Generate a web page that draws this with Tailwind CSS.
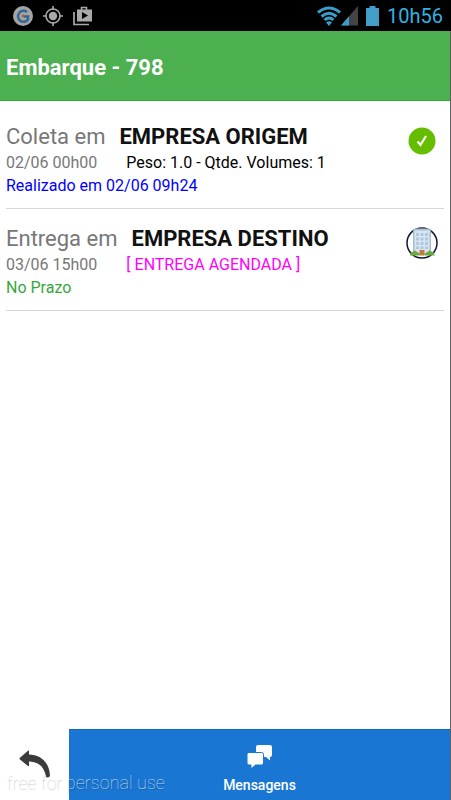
<!DOCTYPE html>
<html lang="pt-BR">
<head>
<meta charset="utf-8">
<meta name="viewport" content="width=device-width, initial-scale=1">
<title>Embarque - 798</title>
<script src="https://cdn.jsdelivr.net/npm/@tailwindcss/browser@4"></script>
</head>
<body class="font-[Roboto,sans-serif] bg-white text-black">
<div class="relative flex min-h-screen flex-col border-r border-[#606060]">
  <div class="-mr-px flex h-[31px] items-center justify-between bg-black pl-3 pr-2">
    <div class="flex items-center gap-2">
      <svg class="size-[22px]" viewBox="0 0 22 22" aria-hidden="true"><circle cx="11" cy="11" r="10" fill="#a3a3a3"/><path d="M15 7A5.500 5.500 0 1 0 16 14.500V11.500H12" fill="none" stroke="#2f6898" stroke-width="2.400"/><circle cx="11" cy="11" r="1.400" fill="#c65a28"/></svg>
      <svg class="size-[22px]" viewBox="0 0 22 22" fill="none" stroke="#a9a9a9" aria-hidden="true"><circle cx="11" cy="11" r="7" stroke-width="1.600"/><circle cx="11" cy="11" r="4.200" fill="#a9a9a9" stroke="none"/><path d="M11 1v4M11 17v4M1 11h4M17 11h4" stroke-width="1.600"/></svg>
      <svg class="size-[22px]" viewBox="0 0 22 22" aria-hidden="true"><path d="M2 7v12.500H17" fill="none" stroke="#a9a9a9" stroke-width="1.700"/><path d="M9.500 5V2.500h5V5" fill="none" stroke="#a9a9a9" stroke-width="1.600"/><path fill="#a9a9a9" fill-rule="evenodd" d="M5 4.500h15V16.500H5zM10 7v7l6-3.500z"/></svg>
    </div>
    <div class="flex items-center gap-2">
      <div class="flex items-center">
        <svg class="h-[20px] w-[24px]" viewBox="0 0 24 20" fill="none" stroke="#3b9dcb" stroke-width="3" aria-hidden="true"><path d="M1 6.500Q12-2.500 23 6.500M4.500 10.500Q12 4 19.500 10.500M7.500 14Q12 10 16.500 14"/><path d="M9 16.500q3-2.400 6 0l-3 3.500z" fill="#3b9dcb" stroke="none"/></svg>
        <svg class="h-[20px] w-[17px]" viewBox="0 0 17 20" aria-hidden="true"><path d="M17 0v19.500H0z" fill="#444"/><path d="M8 10.300v9.200H0z" fill="#3b9dcb"/></svg>
      </div>
      <svg class="h-[20px] w-[13px]" viewBox="0 0 13 20" aria-hidden="true"><path d="M3.500 0h6v2H13v18H0V2h3.500z" fill="#429dc8"/></svg>
      <time class="text-[20px] leading-6 text-[#35b1e1]">10h56</time>
    </div>
  </div>
  <header class="flex h-[70px] items-center border-b border-[#34a53b] bg-[#4caf50] px-[6px] pt-1">
    <h1 class="text-[22px] font-bold leading-7 text-white">Embarque - 798</h1>
  </header>
  <main class="flex-1 px-[6px] pt-[6px]">
    <ul>
      <li class="flex justify-between border-b border-[#d8d8d8] pb-[11px] pt-4">
        <div>
          <h2 class="flex gap-[14px] text-[22px] leading-7"><span class="text-[#777]">Coleta em</span><b class="font-bold text-[#111]">EMPRESA ORIGEM</b></h2>
          <p class="flex gap-[29px] text-[16px] leading-[23px]"><span class="text-[#777]">02/06 00h00</span><span>Peso: 1.0 - Qtde. Volumes: 1</span></p>
          <p class="text-[16px] leading-[23px] text-[#0000ff]">Realizado em 02/06 09h24</p>
        </div>
        <svg class="mr-[6px] mt-[2px] size-8" viewBox="0 0 32 32" role="img" aria-label="Realizado"><circle cx="16" cy="16" r="13.500" fill="#65bd00"/><path d="M11.500 16.500l3 3.500 5.500-9" fill="none" stroke="#fff" stroke-width="2.200"/></svg>
      </li>
      <li class="flex justify-between border-b border-[#d8d8d8] pb-[11px] pt-4">
        <div>
          <h2 class="flex gap-[14px] text-[22px] leading-7"><span class="text-[#777]">Entrega em</span><b class="font-bold text-[#111]">EMPRESA DESTINO</b></h2>
          <p class="flex gap-[29px] text-[16px] leading-[23px]"><span class="text-[#777]">03/06 15h00</span><span class="text-[#ff00ff]">[ ENTREGA AGENDADA ]</span></p>
          <p class="text-[16px] leading-[23px] text-[#35a83a]">No Prazo</p>
        </div>
        <svg class="mr-[6px] mt-[2px] size-8" viewBox="0 0 32 32" role="img" aria-label="Empresa"><circle cx="16" cy="16" r="15" fill="#fff" stroke="#10182f" stroke-width="1.500"/><path d="M7 4l1-2.500h16L25 4v24H7z" fill="#a9bdd2"/><path d="M8.500 3.500h15V26h-15z" fill="#d6e5f3"/><path d="M10 6h3v3h-3zM14.500 6h3v3h-3zM19 6h3v3h-3zM10 10.500h3v3h-3zM14.500 10.500h3v3h-3zM19 10.500h3v3h-3zM10 15h3v3h-3zM14.500 15h3v3h-3zM19 15h3v3h-3zM10 19.500h3v2.500h-3zM14.500 19.500h3v2.500h-3zM19 19.500h3v2.500h-3z" fill="#b0c7dd"/><path d="M13.500 23h5v5.500h-5z" fill="#c27b3b"/><path d="M4 28.500q-.5-3 2.500-3.500 2.500-3 4.500 0 3 .5 2.500 3.500zM19 28.500q-.5-3 2.500-3.500 2.500-3 4.500 0 3 .5 2.500 3.500z" fill="#6cab3c"/></svg>
      </li>
    </ul>
  </main>
  <nav class="flex h-[71px]">
    <button type="button" aria-label="Voltar" class="flex w-[69px] items-center justify-center">
      <svg class="h-[29px] w-[32px]" viewBox="0 0 32 29" aria-hidden="true"><path d="M0.700 8L9 .7q1-.6 1 .6V4.500C22 4.500 30.500 13 31 25.500q-.4 2-2.300 2-1.500 0-1.800-1.600C25 16.500 19 11.500 10 11.500v4q0 1.200-1 .5L.700 9.300q-.5-.6 0-1.300z" fill="#3b3b3b"/></svg>
    </button>
    <button type="button" class="flex flex-1 flex-col items-center border-t border-[#0f67c4] bg-[#1976d2] pt-[15px] text-[14px] font-medium leading-5 text-white">
      <svg class="mb-[6px] h-[24px] w-[26px]" viewBox="0 0 26 24" aria-hidden="true"><path fill="#fff" d="M11 0h12q2 0 2 2v8q0 2-2 2v3.500L19 12h-8q-2 0-2-2V2q0-2 2-2z"/><path fill="#fff" stroke="#1976d2" d="M2 7.500h12.500q2 0 2 2V18q0 2-2 2H8.500L4 24v-4H2q-2 0-2-2V9.500q0-2 2-2z"/></svg>
      <span>Mensagens</span>
    </button>
  </nav>
  <span class="pointer-events-none absolute bottom-[5px] left-[6px] text-[18px] font-thin leading-6 text-white/70 [text-shadow:1px_1px_1px_#00000040]">free for personal use</span>
</div>
</body>
</html>
